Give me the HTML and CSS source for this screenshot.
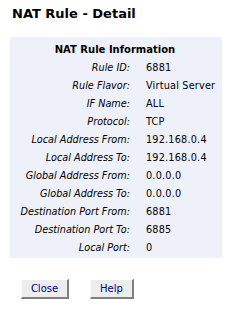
FILE: index.html
```html
<!DOCTYPE html>
<html>
<head>
<meta charset="utf-8">
<link rel="stylesheet" href="styles.css">
</head>
<body>
<h1 class="title">NAT Rule - Detail</h1>
<div class="panel">
  <div class="panel-head">NAT Rule Information</div>
  <div class="grid">
    <div class="lbl">Rule ID:</div><div class="val">6881</div>
    <div class="lbl">Rule Flavor:</div><div class="val">Virtual Server</div>
    <div class="lbl">IF Name:</div><div class="val">ALL</div>
    <div class="lbl">Protocol:</div><div class="val">TCP</div>
    <div class="lbl">Local Address From:</div><div class="val">192.168.0.4</div>
    <div class="lbl">Local Address To:</div><div class="val">192.168.0.4</div>
    <div class="lbl">Global Address From:</div><div class="val">0.0.0.0</div>
    <div class="lbl">Global Address To:</div><div class="val">0.0.0.0</div>
    <div class="lbl">Destination Port From:</div><div class="val">6881</div>
    <div class="lbl">Destination Port To:</div><div class="val">6885</div>
    <div class="lbl">Local Port:</div><div class="val">0</div>
  </div>
</div>
<div class="buttons">
  <button class="btn btn-close">Close</button>
  <button class="btn btn-help">Help</button>
</div>
</body>
</html>
```
FILE: styles.css
```css
html, body {
  margin: 0;
  padding: 0;
  background: #ffffff;
}
body {
  font-family: "DejaVu Sans", Verdana, sans-serif;
  color: #000000;
  width: 252px;
  height: 319px;
  overflow: hidden;
}
.title {
  margin: 0;
  padding: 5px 0 0 12px;
  height: 37px;
  box-sizing: border-box;
  font-size: 13px;
  font-weight: bold;
  line-height: 18px;
}
.panel {
  margin-left: 10px;
  width: 212px;
  background: #eef1f9;
  padding: 4px 0 1px 0;
  box-sizing: border-box;
}
.panel-head {
  height: 18px;
  line-height: 18px;
  text-align: center;
  font-size: 10px;
  font-weight: bold;
  padding-right: 2px;
}
.grid {
  display: grid;
  grid-template-columns: 120px 1fr;
  column-gap: 16px;
  grid-auto-rows: 18px;
  font-size: 9.7px;
  line-height: 18px;
}
.lbl {
  text-align: right;
  font-style: italic;
  white-space: nowrap;
}
.val {
  white-space: nowrap;
  letter-spacing: 0.2px;
}
.buttons {
  display: flex;
  gap: 21px;
  padding: 21px 0 0 21px;
}
.btn {
  font-family: "DejaVu Sans", Verdana, sans-serif;
  font-size: 10px;
  color: #000080;
  background: #ededed;
  height: 20px;
  box-sizing: border-box;
  padding: 0;
  border-style: solid;
  border-width: 1px 2px 2px 1px;
  border-color: #ffffff #7f7f7f #7f7f7f #ffffff;
}
.btn-close { width: 48px; }
.btn-help { width: 44px; }
```
